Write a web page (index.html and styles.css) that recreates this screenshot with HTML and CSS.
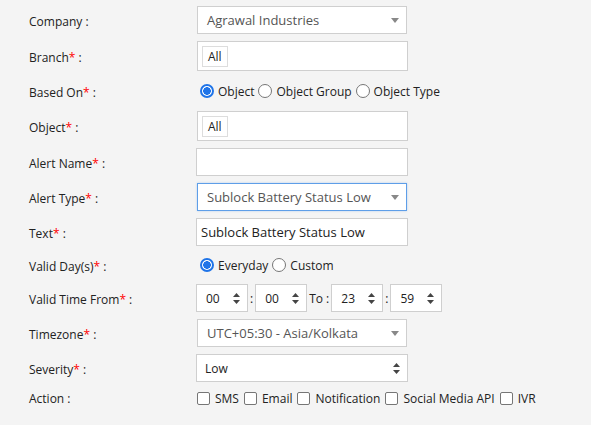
FILE: index.html
```html
<!DOCTYPE html>
<html>
<head>
<meta charset="utf-8">
<link rel="stylesheet" href="styles.css">
</head>
<body>
<form class="form">
  <div class="row h28">
    <div class="lbl">Company :</div>
    <div class="select"><span class="val">Agrawal Industries</span><span class="caret"></span></div>
  </div>
  <div class="row h30">
    <div class="lbl">Branch<span class="req">*</span> :</div>
    <div class="multi"><span class="chip">All</span></div>
  </div>
  <div class="row h26">
    <div class="lbl">Based On<span class="req">*</span> :</div>
    <div class="opts">
      <span class="radio on"></span><span class="opt">Object</span>
      <span class="radio"></span><span class="opt">Object Group</span>
      <span class="radio"></span><span class="opt">Object Type</span>
    </div>
  </div>
  <div class="row h30">
    <div class="lbl">Object<span class="req">*</span> :</div>
    <div class="multi"><span class="chip">All</span></div>
  </div>
  <div class="row h28">
    <div class="lbl">Alert Name<span class="req">*</span> :</div>
    <div class="input"></div>
  </div>
  <div class="row h28">
    <div class="lbl">Alert Type<span class="req">*</span> :</div>
    <div class="select focus"><span class="val">Sublock Battery Status Low</span><span class="caret"></span></div>
  </div>
  <div class="row h28">
    <div class="lbl">Text<span class="req">*</span> :</div>
    <div class="input"><span class="txt">Sublock Battery Status Low</span></div>
  </div>
  <div class="row h24">
    <div class="lbl">Valid Day(s)<span class="req">*</span> :</div>
    <div class="opts">
      <span class="radio on"></span><span class="opt">Everyday</span>
      <span class="radio"></span><span class="opt">Custom</span>
    </div>
  </div>
  <div class="row h28">
    <div class="lbl">Valid Time From<span class="req">*</span> :</div>
    <div class="times">
      <div class="tsel"><span>00</span><svg class="spin" width="7" height="11" viewBox="0 0 7 11"><path d="M3.5 0L7 4H0z M3.5 11L0 7h7z" fill="#444"/></svg></div>
      <span class="sep">:</span>
      <div class="tsel"><span>00</span><svg class="spin" width="7" height="11" viewBox="0 0 7 11"><path d="M3.5 0L7 4H0z M3.5 11L0 7h7z" fill="#444"/></svg></div>
      <span class="sep">To :</span>
      <div class="tsel"><span>23</span><svg class="spin" width="7" height="11" viewBox="0 0 7 11"><path d="M3.5 0L7 4H0z M3.5 11L0 7h7z" fill="#444"/></svg></div>
      <span class="sep">:</span>
      <div class="tsel"><span>59</span><svg class="spin" width="7" height="11" viewBox="0 0 7 11"><path d="M3.5 0L7 4H0z M3.5 11L0 7h7z" fill="#444"/></svg></div>
    </div>
  </div>
  <div class="row h28">
    <div class="lbl">Timezone<span class="req">*</span> :</div>
    <div class="select"><span class="val">UTC+05:30 - Asia/Kolkata</span><span class="caret"></span></div>
  </div>
  <div class="row h28">
    <div class="lbl">Severity<span class="req">*</span> :</div>
    <div class="nsel"><span>Low</span><svg class="spin" width="7" height="11" viewBox="0 0 7 11"><path d="M3.5 0L7 4H0z M3.5 11L0 7h7z" fill="#444"/></svg></div>
  </div>
  <div class="row h18">
    <div class="lbl act">Action :</div>
    <div class="checks">
      <span class="cb"></span><span class="copt">SMS</span>
      <span class="cb"></span><span class="copt">Email</span>
      <span class="cb"></span><span class="copt">Notification</span>
      <span class="cb"></span><span class="copt">Social Media API</span>
      <span class="cb"></span><span class="copt">IVR</span>
    </div>
  </div>
</form>
</body>
</html>
```
FILE: styles.css
```css
html, body {
  margin: 0;
  padding: 0;
  background: #f4f4f4;
  font-family: "Open Sans", "Liberation Sans", sans-serif;
  font-size: 12px;
  color: #222;
}
.form {
  display: flex;
  flex-direction: column;
  gap: 7px;
  padding: 6px 0 0 29px;
}
.row {
  display: flex;
  align-items: center;
}
.h28 { height: 28px; }
.h30 { height: 30px; }
.h26 { height: 26px; }
.h24 { height: 24px; }
.h18 { height: 18px; }
.lbl {
  width: 167px;
  flex: none;
  color: #222;
  padding-top: 2px;
}
.lbl.act { padding-top: 0; }
.req { color: #f00; }
.select, .input, .multi, .nsel, .tsel {
  box-sizing: border-box;
  height: 100%;
  background: #fff;
  border: 1px solid #cfcfcf;
  display: flex;
  align-items: center;
}
.select {
  width: 210px;
  margin-left: 1px;
  padding-left: 9px;
  font-size: 13px;
  color: #555;
  justify-content: space-between;
  padding-right: 7px;
}
.select.focus {
  border-color: #5e9ee8;
  box-shadow: 0 0 2px rgba(94,158,232,0.4);
}
.caret {
  width: 0;
  height: 0;
  border-left: 4px solid transparent;
  border-right: 4px solid transparent;
  border-top: 5px solid #888;
}
.multi {
  width: 211px;
  margin-left: 1px;
  padding-left: 4px;
}
.chip {
  box-sizing: border-box;
  height: 21px;
  padding: 0 5px;
  border: 1px solid #ddd;
  background: #fff;
  display: flex;
  align-items: center;
  color: #222;
}
.input {
  width: 212px;
  padding-left: 4px;
  font-size: 13px;
  color: #222;
}
.opts, .checks {
  display: flex;
  align-items: center;
  margin-left: 4px;
}
.radio {
  box-sizing: border-box;
  width: 14px;
  height: 14px;
  border-radius: 50%;
  border: 1px solid #767676;
  background: #fff;
  margin-right: 4px;
  flex: none;
}
.radio.on {
  border: 2px solid #1f74e8;
  background: radial-gradient(circle, #1f74e8 0 3.6px, #fff 4px);
}
.opt {
  margin-right: 4px;
}
.times {
  display: flex;
  align-items: center;
  height: 100%;
  gap: 2px;
}
.tsel {
  width: 52px;
  padding-left: 9px;
  padding-right: 7px;
  justify-content: space-between;
  color: #222;
}
.sep { color: #222; }
.nsel {
  width: 212px;
  padding-left: 8px;
  padding-right: 7px;
  justify-content: space-between;
  color: #222;
}
.checks { margin-left: 1px; }
.cb {
  box-sizing: border-box;
  width: 13px;
  height: 13px;
  border: 1px solid #767676;
  border-radius: 2px;
  background: #fff;
  margin-right: 5px;
  flex: none;
}
.copt { margin-right: 5px; }
```
